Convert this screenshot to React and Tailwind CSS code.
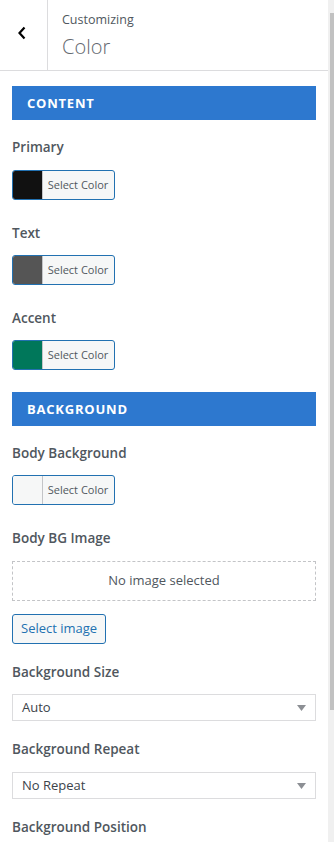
import React from 'react';

const font = { fontFamily: '"Open Sans", "Noto Sans", sans-serif' };

const SectionBar = ({ title }) => (
  <div className="h-[34px] bg-[#2d78cf] flex items-center px-[15px]">
    <span className="text-white text-[13px] font-bold tracking-[0.06em] leading-none">{title}</span>
  </div>
);

const Label = ({ children }) => (
  <div className="text-[13.5px] leading-5 font-semibold text-[#50575e]">{children}</div>
);

const ColorButton = ({ swatch }) => (
  <button className="flex h-[30px] w-[103px] rounded-[3px] border border-[#2271b1] bg-[#f6f7f7] overflow-hidden">
    <span className={`w-[30px] h-full border-r border-[#c3c4c7] ${swatch}`} />
    <span className="flex-1 flex items-center justify-center text-[11px] text-[#50575e] pr-[1px]">Select Color</span>
  </button>
);

const SelectBox = ({ value }) => (
  <div className="h-[27px] border border-[#dcdcde] bg-white flex items-center justify-between pl-[9px] pr-[9px]">
    <span className="text-[13px] text-[#3c434a]">{value}</span>
    <svg width="9" height="6" viewBox="0 0 9 6"><path d="M0 0h9L4.5 6z" fill="#8c8f94" /></svg>
  </div>
);

export default function App() {
  return (
    <div className="relative w-[334px] h-[842px] overflow-hidden bg-white" style={font}>
      {/* scrollbar */}
      <div className="absolute top-0 right-0 w-[6px] h-full bg-[#f0f0f0]">
        <div className="absolute left-[2px] right-0 top-[13px] h-[697px] bg-[#c1c1c1]" />
      </div>

      <div className="w-[328px]">
        {/* Header */}
        <div className="h-[71px] flex border-b border-[#dcdcde]">
          <button className="w-[48px] h-full border-r border-[#dcdcde] flex items-center justify-center">
            <svg width="10" height="14" viewBox="0 0 10 14" className="ml-[-3px] mt-[-4px]">
              <path d="M7.5 1.5 2.5 7l5 5.5" fill="none" stroke="#000" strokeWidth="2.2" />
            </svg>
          </button>
          <div className="pl-[14px] pt-[11px]">
            <div className="text-[12.5px] leading-[18px] text-[#50575e]">Customizing</div>
            <div className="text-[20px] leading-[28px] font-light text-[#646970] mt-[4px]">Color</div>
          </div>
        </div>

        <div className="px-3 pt-[15px]">
          <SectionBar title="CONTENT" />

          <div className="mt-[17px]">
            <Label>Primary</Label>
            <div className="mt-[13px]"><ColorButton swatch="bg-[#111111]" /></div>
          </div>
          <div className="mt-[23px]">
            <Label>Text</Label>
            <div className="mt-[12px]"><ColorButton swatch="bg-[#555555]" /></div>
          </div>
          <div className="mt-[23px]">
            <Label>Accent</Label>
            <div className="mt-[12px]"><ColorButton swatch="bg-[#00775a]" /></div>
          </div>

          <div className="mt-[22px]">
            <SectionBar title="BACKGROUND" />
          </div>

          <div className="mt-[17px]">
            <Label>Body Background</Label>
            <div className="mt-[12px]"><ColorButton swatch="bg-[#f6f7f7]" /></div>
          </div>

          <div className="mt-[23px]">
            <Label>Body BG Image</Label>
            <div className="mt-[13px] h-[40px] border border-dashed border-[#c3c4c7] flex items-center justify-center text-[13px] text-[#50575e]">
              No image selected
            </div>
            <button className="mt-[13px] h-[30px] px-[8px] rounded-[3px] border border-[#2271b1] bg-[#f6f7f7] text-[13px] text-[#2271b1]">
              Select image
            </button>
          </div>

          <div className="mt-[18px]">
            <Label>Background Size</Label>
            <div className="mt-[12px]"><SelectBox value="Auto" /></div>
          </div>

          <div className="mt-[18px]">
            <Label>Background Repeat</Label>
            <div className="mt-[13px]"><SelectBox value="No Repeat" /></div>
          </div>

          <div className="mt-[18px]">
            <Label>Background Position</Label>
          </div>
        </div>
      </div>
    </div>
  );
}
